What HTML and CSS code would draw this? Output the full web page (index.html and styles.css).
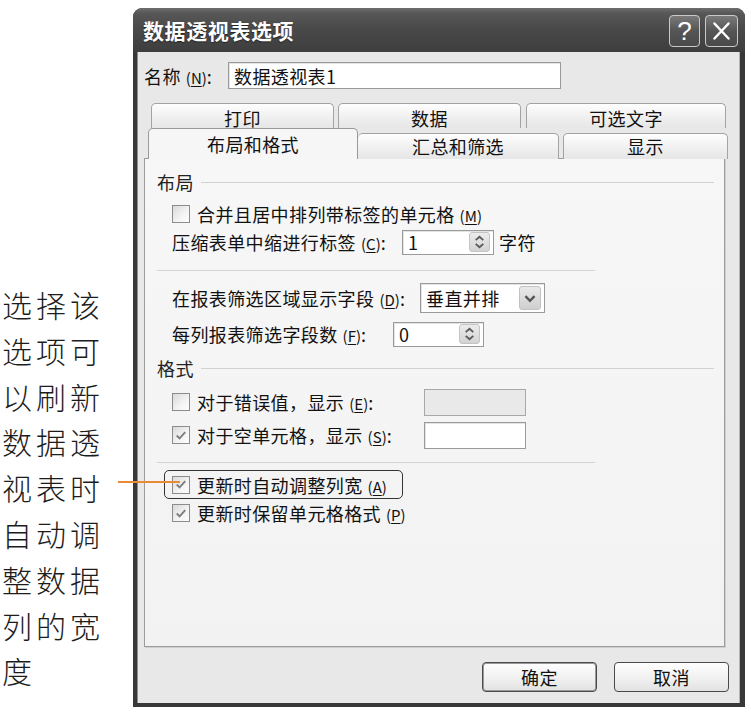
FILE: index.html
```html
<!DOCTYPE html>
<html lang="zh-CN">
<head>
<meta charset="utf-8">
<title>数据透视表选项</title>
<link rel="stylesheet" href="styles.css">
</head>
<body>
<div class="page">
  <div class="note">选择该<br>选项可<br>以刷新<br>数据透<br>视表时<br>自动调<br>整数据<br>列的宽<br>度</div>
  <div class="dialog">
    <div class="titlebar">
      <span class="title">数据透视表选项</span>
      <div class="tbtns">
        <span class="tbtn help">?</span>
        <span class="tbtn close"><svg width="33" height="32" viewBox="0 0 33 32"><path d="M9 8 L24 24 M24 8 L9 24" stroke="#fff" stroke-width="2.6" stroke-linecap="round"/></svg></span>
      </div>
    </div>
    <div class="client">
      <div class="namerow">
        <span class="namelbl">名称<span class="acc">(<u>N</u>)</span>:</span>
        <div class="field name">数据透视表1</div>
      </div>
      <div class="tabs">
        <div class="tabrow back">
          <div class="tab t1">打印</div>
          <div class="tab t2">数据</div>
          <div class="tab t3">可选文字</div>
        </div>
        <div class="tabrow front">
          <div class="tab sel">布局和格式</div>
          <div class="tab t5">汇总和筛选</div>
          <div class="tab t6">显示</div>
        </div>
      </div>
      <div class="panel">
        <div class="group"><span>布局</span><i class="gline"></i></div>
        <div class="row r-merge">
          <span class="cb"></span>
          <span class="txt">合并且居中排列带标签的单元格<span class="acc">(<u>M</u>)</span></span>
        </div>
        <div class="row r-compress">
          <span class="lbl w-compress">压缩表单中缩进行标签<span class="acc">(<u>C</u>)</span>:</span>
          <div class="field spin w92"><span>1</span><span class="spinbtn"><svg width="20" height="20" viewBox="0 0 20 20"><path d="M6 8 L10 4.5 L14 8 M6 12 L10 15.5 L14 12" fill="none" stroke="#5a5a5a" stroke-width="2"/></svg></span></div>
          <span class="unit">字符</span>
        </div>
        <i class="sep"></i>
        <div class="row r-display">
          <span class="lbl w-display">在报表筛选区域显示字段<span class="acc">(<u>D</u>)</span>:</span>
          <div class="field select"><span>垂直并排</span><span class="dropbtn"><svg width="22" height="22" viewBox="0 0 22 22"><path d="M6 9 L11 14 L16 9" fill="none" stroke="#555" stroke-width="2.6"/></svg></span></div>
        </div>
        <div class="row r-percol">
          <span class="lbl w-percol">每列报表筛选字段数<span class="acc">(<u>F</u>)</span>:</span>
          <div class="field spin w91"><span>0</span><span class="spinbtn"><svg width="20" height="20" viewBox="0 0 20 20"><path d="M6 8 L10 4.5 L14 8 M6 12 L10 15.5 L14 12" fill="none" stroke="#5a5a5a" stroke-width="2"/></svg></span></div>
        </div>
        <div class="group g2"><span>格式</span><i class="gline"></i></div>
        <div class="row r-err">
          <span class="cb"></span>
          <span class="txt w-err">对于错误值，显示<span class="acc">(<u>E</u>)</span>:</span>
          <div class="field box disabled"></div>
        </div>
        <div class="row r-empty">
          <span class="cb on"><svg width="17" height="17" viewBox="0 0 17 17"><path d="M4 8.5 L7 11.5 L13 5" fill="none" stroke="#7d7d7d" stroke-width="2"/></svg></span>
          <span class="txt w-err">对于空单元格，显示<span class="acc">(<u>S</u>)</span>:</span>
          <div class="field box"></div>
        </div>
        <i class="sep s2"></i>
        <div class="row r-autofit">
          <span class="cb on"><svg width="17" height="17" viewBox="0 0 17 17"><path d="M4 8.5 L7 11.5 L13 5" fill="none" stroke="#7d7d7d" stroke-width="2"/></svg></span>
          <span class="txt">更新时自动调整列宽<span class="acc">(<u>A</u>)</span></span>
        </div>
        <div class="row r-keep">
          <span class="cb on"><svg width="17" height="17" viewBox="0 0 17 17"><path d="M4 8.5 L7 11.5 L13 5" fill="none" stroke="#7d7d7d" stroke-width="2"/></svg></span>
          <span class="txt">更新时保留单元格格式<span class="acc">(<u>P</u>)</span></span>
        </div>
      </div>
      <div class="btnrow">
        <span class="btn default">确定</span>
        <span class="btn">取消</span>
      </div>
    </div>
  </div>
  <i class="callout"></i>
</div>
</body>
</html>
```

FILE: styles.css
```css
* { box-sizing: border-box; margin: 0; padding: 0; }
html, body { width: 751px; height: 713px; background: #fff; overflow: hidden; }
body { font-family: "Noto Sans CJK SC", "Noto Sans", sans-serif; color: #111; }

.page { position: relative; display: flex; align-items: flex-start; height: 713px; }

.note {
  width: 133px; flex: none;
  padding: 282px 0 0 2px;
  font-size: 30px; line-height: 45.8px; letter-spacing: 4px;
  color: #1c1c1c; font-weight: 300;
}

.callout {
  position: absolute; left: 118px; top: 481px;
  width: 62px; height: 2px; background: #eb8a36;
}

.dialog {
  margin-top: 8px; width: 612px; height: 699px; flex: none;
  display: flex; flex-direction: column;
  background: #383838;
  border-radius: 9px 9px 0 0; overflow: hidden;
}

.titlebar {
  height: 44px; flex: none;
  display: flex; align-items: flex-start; justify-content: space-between;
  padding: 0 7px 0 10px;
  background: linear-gradient(#6e6e6e 0, #575757 12%, #4a4a4a 45%, #3e3e3e 100%);
}
.title {
  font-size: 21px; font-weight: 700; color: #fff; line-height: 44px;
  letter-spacing: 0.6px; text-shadow: 0 1px 1px #222;
}
.tbtns { display: flex; gap: 5px; padding-top: 7px; }
.tbtn {
  height: 32px; display: flex; align-items: center; justify-content: center;
  border: 1px solid #c9c9c9; border-radius: 4px;
  background: linear-gradient(#7a7a7a, #555 50%, #4a4a4a);
  color: #fff;
}
.help { width: 31px; font-family: "Liberation Sans", sans-serif; font-size: 26px; }
.close { width: 33px; }

.client {
  flex: 1; margin: 0 5px 4px 4px;
  background: #e8e8e8;
  border-left: 1px solid #8c8c8c; border-right: 1px solid #b5b5b5;
  padding: 10px 0 0 6px;
  display: flex; flex-direction: column;
  font-size: 18px; letter-spacing: 0.4px;
}

.acc { font-size: 15px; margin-left: 5px; letter-spacing: 0; }
.acc u { text-underline-offset: 2px; }

.namerow { height: 27px; display: flex; align-items: center; }
.namelbl { width: 84px; }

.field {
  background: #fff; border: 1px solid #9a9a9a;
  display: flex; align-items: center; padding-left: 5px;
  box-shadow: inset 1px 1px 0 #e4e4e4;
}
.name { width: 333px; height: 27px; }

.tabs { margin: 14px 0 0 4px; position: relative; z-index: 2; }
.tabrow { display: flex; }
.tab {
  border: 1px solid #a3a3a3; border-bottom: none;
  border-radius: 5px 5px 0 0;
  background: linear-gradient(#fefefe, #f1f1f1 50%, #e6e6e6);
  text-align: center; line-height: 22px;
}
.back { height: 25px; padding-left: 3px; }
.back .tab { height: 25px; padding-top: 3px; }
.t1 { width: 183px; margin-right: 4px; }
.t2 { width: 183px; margin-right: 5px; }
.t3 { width: 200px; }
.front { height: 31px; align-items: flex-end; margin-bottom: -1px; }
.front .tab { height: 26px; line-height: 24px; }
.sel {
  width: 210px; height: 31px !important; padding-top: 3px;
  background: #f6f6f6; border-color: #999;
}
.t5 { width: 201px; border-left: none; margin-right: 4px; }
.t6 { width: 165px; }

.panel {
  width: 581px; height: 489px; flex: none;
  background: linear-gradient(#f7f7f7, #f2f2f2);
  border: 1px solid #9c9c9c;
  box-shadow: 1px 1px 0 #cfcfcf;
  padding: 11px 10px 0 12px;
  display: flex; flex-direction: column;
}

.group { height: 24px; display: flex; align-items: center; color: #222; }
.gline { flex: 1; height: 1px; background: #d2d2d2; margin-left: 7px; }
.g2 { margin-top: 8px; }

.row { display: flex; align-items: center; padding-left: 15px; }
.cb {
  width: 18px; height: 18px; flex: none;
  border: 1px solid #8c8c8c;
  background: linear-gradient(135deg, #d9d9d9, #f4f4f4 60%, #fdfdfd);
  display: flex; align-items: center; justify-content: center;
  margin-right: 7px;
}
.r-merge { height: 24px; margin-top: 8px; }
.r-compress { height: 26px; margin-top: 3px; }
.w-compress { width: 230px; }
.w92 { width: 92px; }
.w91 { width: 91px; }
.spin { height: 25px; justify-content: space-between; padding-right: 3px; }
.spinbtn {
  width: 21px; height: 20px; display: flex; align-items: center; justify-content: center;
  border-radius: 3px; border: 1px solid #c4c4c4;
  background: linear-gradient(#ececec, #d3d3d3);
}
.unit { margin-left: 5px; }

.sep { display: block; width: 438px; height: 1px; background: #d4d4d4; margin-top: 15px; flex: none; }
.s2 { margin-top: 13px; }

.r-display { height: 30px; margin-top: 12px; }
.w-display { width: 248px; }
.select { width: 125px; height: 30px; justify-content: space-between; padding-right: 3px; }
.dropbtn {
  width: 22px; height: 24px; display: flex; align-items: center; justify-content: center;
  border-radius: 3px; border: 1px solid #c2c2c2;
  background: linear-gradient(#e9e9e9, #cfcfcf);
}

.r-percol { height: 28px; margin-top: 7px; }
.w-percol { width: 221px; }

.r-err { height: 28px; margin-top: 8px; }
.r-empty { height: 28px; margin-top: 5px; }
.w-err { width: 227px; }
.box { width: 102px; height: 27px; }
.disabled { background: #e9e9e9; border-color: #a8a8a8; box-shadow: none; }

.r-autofit {
  height: 29px; margin: 7px 0 0 7px; width: 239px; padding-left: 7px;
  border: 1.5px solid #333; border-radius: 5px;
}
.r-keep { height: 24px; margin-top: 2px; }

.btnrow { display: flex; justify-content: flex-end; gap: 17px; margin-top: 15px; padding-right: 10px; }
.btn {
  width: 115px; height: 30px; display: flex; align-items: center; justify-content: center;
  border: 1px solid #4a4a4a; border-radius: 4px;
  background: linear-gradient(#fefefe, #f2f2f2 50%, #e2e2e2);
}
.default { box-shadow: inset 0 0 0 1px #9a9a9a; }
```
